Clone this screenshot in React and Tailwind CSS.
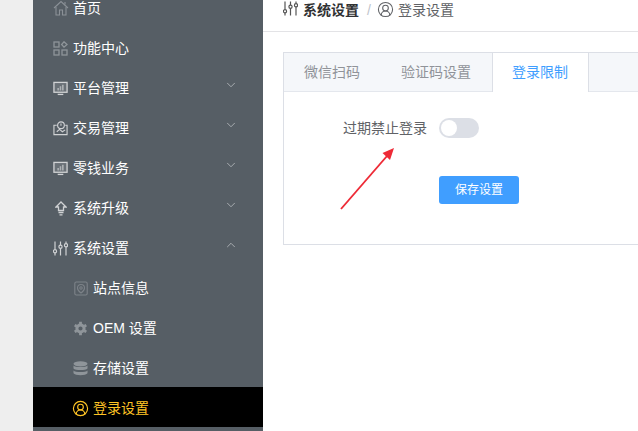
// Settings page: sidebar, breadcrumb and login restriction tab
import { ChevronDown, ChevronUp, CircleUserRound } from 'lucide-react';

const FONT = "font-['Liberation_Sans','Noto_Sans_CJK_SC',sans-serif]";

function HomeIcon() {
  return (
    <svg width="16" height="16" viewBox="0 0 16 16" fill="none" stroke="#8b9197" strokeWidth="1.1">
      <path d="M1 8 L8 1.5 L15 8" />
      <path d="M3 7 V15 H6.5 V10 H9.5 V15 H13 V7" />
      <path d="M12 2 V4.5" />
    </svg>
  );
}

function GridIcon() {
  return (
    <svg width="15" height="15" viewBox="0 0 15 15" fill="none" stroke="#8f959a" strokeWidth="1.3">
      <rect x="1" y="1" width="5" height="5" />
      <path d="M11 0.8 L14 3.5 L11 6.2 L8.6 3.5 Z" />
      <rect x="1" y="9" width="5" height="5" />
      <rect x="9" y="9" width="5" height="5" />
    </svg>
  );
}

function MonitorIcon() {
  return (
    <svg width="15" height="15" viewBox="0 0 16 15" fill="none" stroke="#d0d2d4" strokeWidth="1.4">
      <rect x="1" y="1" width="14" height="10.5" fill="#6a7177" />
      <path d="M5 13.8 H11" />
      <path d="M5.5 9.5 V7 M8 9.5 V5 M10.5 9.5 V3.5" strokeWidth="1.7" stroke="#aeb2b5" />
    </svg>
  );
}

function TradeIcon() {
  return (
    <svg width="15" height="16" viewBox="0 0 16 16" fill="none" stroke="#d0d2d4" strokeWidth="1.2">
      <path d="M4 5 H1 V15 H15 V5 H13" />
      <circle cx="8.5" cy="5" r="3.6" />
      <path d="M8.5 3.2 V5.5 M4 12 L7 9.5 L10 12 L13 10" />
    </svg>
  );
}

function UpgradeIcon() {
  return (
    <svg width="12" height="15" viewBox="0 0 12 15" fill="none" stroke="#d0d2d4" strokeWidth="1.3" className="ml-[2px]">
      <path d="M6 1 L11 6 H8.5 V9.5 H3.5 V6 H1 Z" />
      <path d="M3.5 11.5 H8.5 M4.5 13.8 H7.5" />
    </svg>
  );
}

function SlidersIcon({ color }) {
  return (
    <svg width="15" height="15" viewBox="0 0 15 15" fill="none" stroke={color} strokeWidth="1.2">
      <path d="M2 0.5 V8.5 M2 12 V14.5 M7.5 0.5 V4 M7.5 7.5 V14.5 M13 0.5 V2.5 M13 6 V14.5" />
      <circle cx="2" cy="10.2" r="1.6" />
      <circle cx="7.5" cy="5.8" r="1.6" />
      <circle cx="13" cy="4.3" r="1.6" />
    </svg>
  );
}

function SiteIcon() {
  return (
    <svg width="14" height="15" viewBox="0 0 14 15" fill="none" stroke="#7d8389" strokeWidth="1.1">
      <rect x="0.8" y="1" width="12.4" height="13" rx="1.5" />
      <path d="M7 3.5 C9.5 3.5 10.5 5.5 10.5 7 C10.5 9 8.5 11 7 12 C5.5 11 3.5 9 3.5 7 C3.5 5.5 4.5 3.5 7 3.5 Z" />
      <circle cx="7" cy="7" r="1.2" />
    </svg>
  );
}

function GearIcon() {
  return (
    <svg width="15" height="15" viewBox="0 0 15 15" fill="none">
      <circle cx="7.5" cy="7.5" r="3.6" stroke="#8f959a" strokeWidth="3" />
      <path
        d="M7.5 0.8 V3 M7.5 12 V14.2 M1.7 4.1 L3.6 5.2 M11.4 9.8 L13.3 10.9 M1.7 10.9 L3.6 9.8 M11.4 5.2 L13.3 4.1"
        stroke="#8f959a"
        strokeWidth="2.8"
      />
    </svg>
  );
}

function DatabaseIcon() {
  return (
    <svg width="15" height="15" viewBox="0 0 15 15" fill="#8f959a">
      <ellipse cx="7.5" cy="2.8" rx="7" ry="2.6" />
      <path d="M0.5 4.6 C2 6.6 13 6.6 14.5 4.6 V7.4 C13 9.6 2 9.6 0.5 7.4 Z" />
      <path d="M0.5 9.4 C2 11.4 13 11.4 14.5 9.4 V12.2 C13 14.8 2 14.8 0.5 12.2 Z" />
    </svg>
  );
}

const menu = [
  { label: '首页', icon: <HomeIcon /> },
  { label: '功能中心', icon: <GridIcon /> },
  { label: '平台管理', icon: <MonitorIcon />, arrow: 'down' },
  { label: '交易管理', icon: <TradeIcon />, arrow: 'down' },
  { label: '零钱业务', icon: <MonitorIcon />, arrow: 'down' },
  { label: '系统升级', icon: <UpgradeIcon />, arrow: 'down' },
  { label: '系统设置', icon: <SlidersIcon color="#d0d2d4" />, arrow: 'up' },
];

const subMenu = [
  { label: '站点信息', icon: <SiteIcon /> },
  { label: 'OEM 设置', icon: <GearIcon /> },
  { label: '存储设置', icon: <DatabaseIcon /> },
];

function MenuRow({ item }) {
  return (
    <div className="h-10 pt-[2px] flex items-center pl-[20px] pr-[25px] text-[14px] text-white">
      <span className="w-[20px] flex items-center shrink-0">{item.icon}</span>
      <span className="flex-1">{item.label}</span>
      {item.arrow === 'down' && <ChevronDown size={14} color="#c0c3c6" strokeWidth={1.3} className="-mt-[7px]" />}
      {item.arrow === 'up' && <ChevronUp size={14} color="#c0c3c6" strokeWidth={1.3} className="-mt-[7px]" />}
    </div>
  );
}

function SubRow({ item }) {
  return (
    <div className="h-10 pt-[2px] flex items-center pl-[40px] text-[14px] text-white">
      <span className="w-[15px] flex items-center justify-center shrink-0 mr-[5px]">{item.icon}</span>
      <span>{item.label}</span>
    </div>
  );
}

function Sidebar() {
  return (
    <aside className="w-[230px] bg-[#565e65] shrink-0 -mt-[13px]">
      {menu.map((item) => <MenuRow key={item.label} item={item} />)}
      {subMenu.map((item) => <SubRow key={item.label} item={item} />)}
      <div className="h-10 pt-[2px] flex items-center pl-[40px] text-[14px] text-[#ffc425] bg-black">
        <span className="w-[15px] flex items-center justify-center shrink-0 mr-[5px]">
          <CircleUserRound size={17} color="#ffc425" strokeWidth={1.6} className="shrink-0" />
        </span>
        <span>登录设置</span>
      </div>
      <div className="h-[10px]" />
    </aside>
  );
}

function Breadcrumb() {
  return (
    <div className="h-[32px] border-b border-[#e3e3e6] flex items-start pl-[20px] text-[14px] leading-[20px]">
      <span className="mt-[1px] mr-[5px]"><SlidersIcon color="#555" /></span>
      <span className="font-bold text-[#303133]">系统设置</span>
      <span className="mx-[8px] text-[#c0c4cc]">/</span>
      <span className="w-[15px] mt-[1px] mr-[5px] -ml-[1px] flex justify-center">
        <CircleUserRound size={17} color="#606266" strokeWidth={1.5} className="shrink-0" />
      </span>
      <span className="text-[#606266]">登录设置</span>
    </div>
  );
}

function SettingsCard() {
  return (
    <div className="mt-[20px] ml-[20px] border border-[#dcdfe6] border-r-0 h-[193px] w-[400px]">
      <div className="h-[39px] bg-[#f5f7fa] border-b border-[#e4e7ed] flex text-[14px]">
        <div className="w-[97px] pl-[20px] leading-[39px] text-[#909399]">微信扫码</div>
        <div className="w-[111px] pl-[20px] leading-[39px] text-[#909399]">验证码设置</div>
        <div className="w-[97px] h-[39px] pl-[19px] leading-[39px] text-[#409eff] bg-white border-x border-[#dcdfe6]">登录限制</div>
      </div>
      <div className="pt-[26px] flex flex-col">
        <div className="flex items-center h-[20px] text-[14px] text-[#606266]">
          <span className="w-[143px] text-right">过期禁止登录</span>
          <span className="ml-[12px] w-[40px] h-[20px] rounded-full bg-[#dcdfe6] p-[2px] flex">
            <span className="w-[16px] h-[16px] rounded-full bg-white" />
          </span>
        </div>
        <button className="mt-[38px] ml-[155px] w-[80px] h-[28px] rounded-[3px] bg-[#409eff] text-white text-[12px]">
          保存设置
        </button>
      </div>
    </div>
  );
}

function RedArrow() {
  return (
    <svg className="absolute left-[335px] top-[143px]" width="62" height="72" viewBox="0 0 62 72" fill="none">
      <path d="M6 66 L52 13" stroke="#ee2a36" strokeWidth="1.9" />
      <path d="M59 5 L47.5 10 L55 17 Z" fill="#ee2a36" />
    </svg>
  );
}

export default function App() {
  return (
    <div className={`${FONT} relative w-[638px] h-[431px] overflow-hidden bg-white flex`}>
      <div className="w-[33px] bg-[#eeeeee] shrink-0" />
      <Sidebar />
      <main className="flex-1 min-w-0">
        <Breadcrumb />
        <SettingsCard />
      </main>
      <RedArrow />
    </div>
  );
}
